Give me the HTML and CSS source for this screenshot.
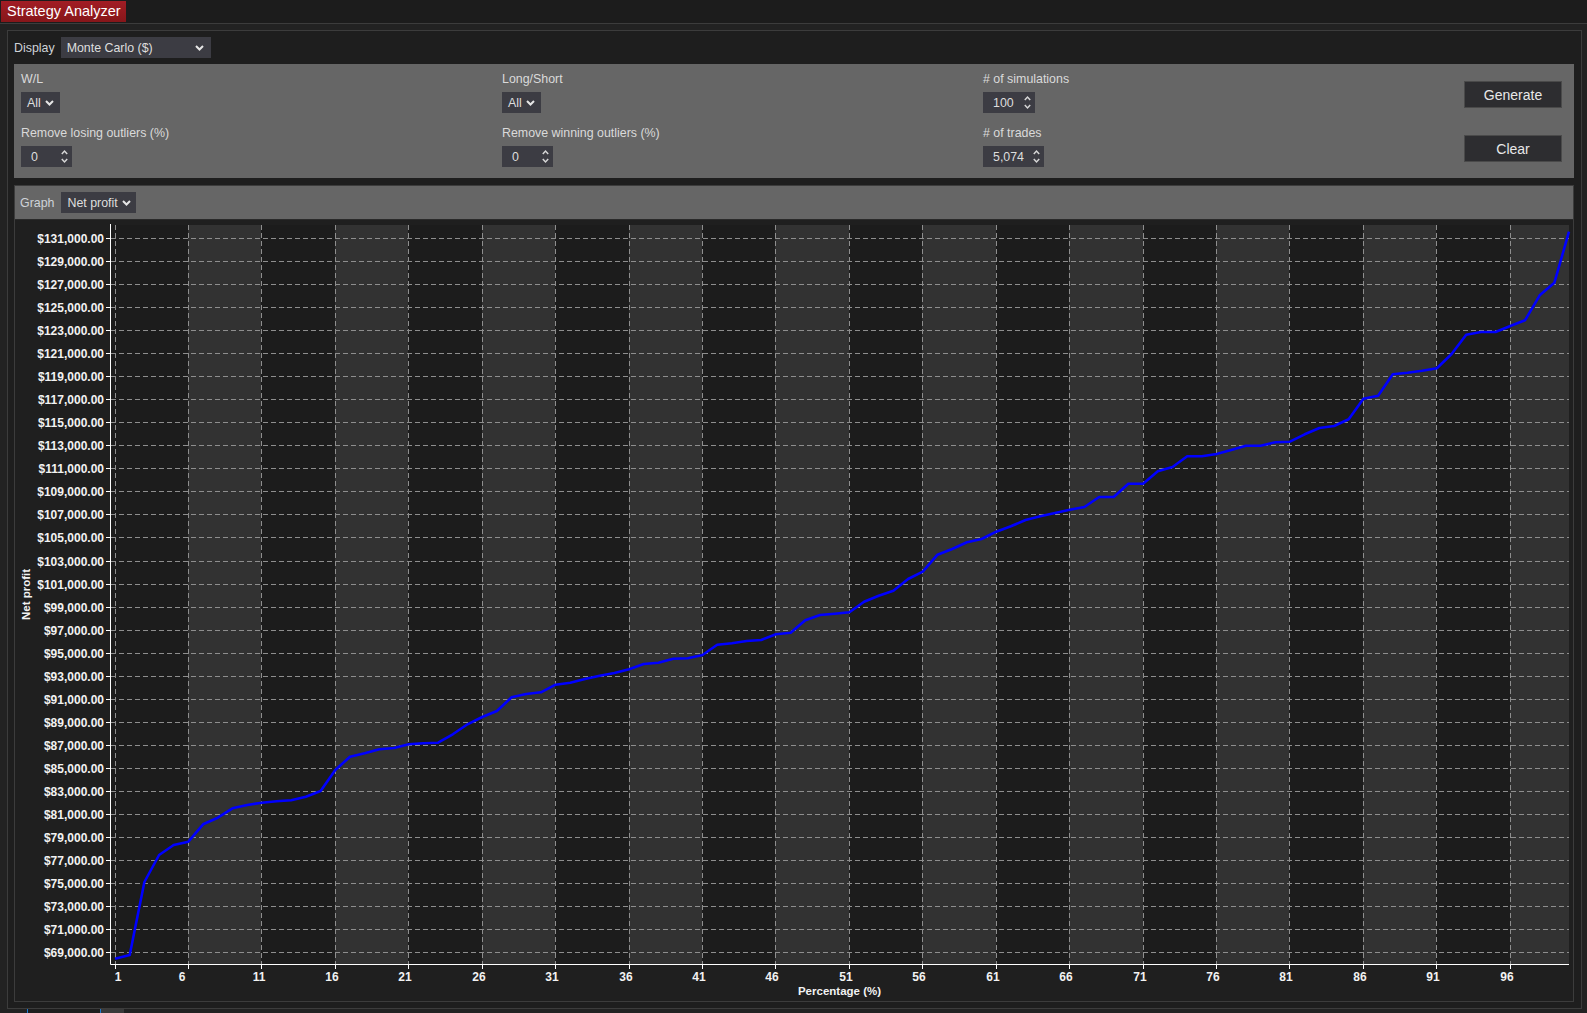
FILE: index.html
```html
<!DOCTYPE html>
<html>
<head>
<meta charset="utf-8">
<title>Strategy Analyzer</title>
<link rel="stylesheet" href="styles.css">
</head>
<body>
<div class="topbar"><div class="tab">Strategy Analyzer</div></div>
<div class="frame">
  <div class="display-row">
    <span class="lbl-inline">Display</span>
    <div class="dd dd-display"><span>Monte Carlo ($)</span><svg class="chev" width="9" height="6" viewBox="0 0 9 6"><polyline points="1,1 4.5,4.5 8,1"/></svg></div>
  </div>
  <div class="gray">
    <div class="col">
      <div class="field"><div class="lbl">W/L</div><div class="dd dd-all"><span>All</span><svg class="chev" width="9" height="6" viewBox="0 0 9 6"><polyline points="1,1 4.5,4.5 8,1"/></svg></div></div>
      <div class="field"><div class="lbl">Remove losing outliers (%)</div><div class="spin spin-a"><span class="val">0</span><svg class="arrows" width="7" height="21" viewBox="0 0 7 21"><polyline points="0.8,8 3.5,5 6.2,8"/><polyline points="0.8,13 3.5,16 6.2,13"/></svg></div></div>
    </div>
    <div class="col">
      <div class="field"><div class="lbl">Long/Short</div><div class="dd dd-all"><span>All</span><svg class="chev" width="9" height="6" viewBox="0 0 9 6"><polyline points="1,1 4.5,4.5 8,1"/></svg></div></div>
      <div class="field"><div class="lbl">Remove winning outliers (%)</div><div class="spin spin-a"><span class="val">0</span><svg class="arrows" width="7" height="21" viewBox="0 0 7 21"><polyline points="0.8,8 3.5,5 6.2,8"/><polyline points="0.8,13 3.5,16 6.2,13"/></svg></div></div>
    </div>
    <div class="col">
      <div class="field"><div class="lbl"># of simulations</div><div class="spin spin-b"><span class="val">100</span><svg class="arrows" width="7" height="21" viewBox="0 0 7 21"><polyline points="0.8,8 3.5,5 6.2,8"/><polyline points="0.8,13 3.5,16 6.2,13"/></svg></div></div>
      <div class="field"><div class="lbl"># of trades</div><div class="spin spin-c"><span class="val">5,074</span><svg class="arrows" width="7" height="21" viewBox="0 0 7 21"><polyline points="0.8,8 3.5,5 6.2,8"/><polyline points="0.8,13 3.5,16 6.2,13"/></svg></div></div>
    </div>
    <div class="btns">
      <div class="btn">Generate</div>
      <div class="btn">Clear</div>
    </div>
  </div>
  <div class="chart-panel">
    <div class="graph-head">
      <span class="lbl-inline">Graph</span>
      <div class="dd dd-graph"><span>Net profit</span><svg class="chev" width="9" height="6" viewBox="0 0 9 6"><polyline points="1,1 4.5,4.5 8,1"/></svg></div>
    </div>
    <div class="chart">
      <svg class="plot" width="1558" height="781" viewBox="15 220 1558 781">
        <rect class="plot-bg" x="110" y="225" width="1459" height="739"/>
        <g class="bands">
          <rect x="188" y="225" width="73" height="739"/>
          <rect x="335" y="225" width="73" height="739"/>
          <rect x="482" y="225" width="73" height="739"/>
          <rect x="629" y="225" width="73" height="739"/>
          <rect x="775" y="225" width="74" height="739"/>
          <rect x="922" y="225" width="74" height="739"/>
          <rect x="1069" y="225" width="74" height="739"/>
          <rect x="1216" y="225" width="73" height="739"/>
          <rect x="1363" y="225" width="73" height="739"/>
          <rect x="1510" y="225" width="59" height="739"/>
        </g>
        <path class="grid" d="M111 952.5H1569M111 929.5H1569M111 906.5H1569M111 883.5H1569M111 860.5H1569M111 837.5H1569M111 814.5H1569M111 791.5H1569M111 768.5H1569M111 745.5H1569M111 722.5H1569M111 699.5H1569M111 676.5H1569M111 653.5H1569M111 630.5H1569M111 607.5H1569M111 584.5H1569M111 561.5H1569M111 537.5H1569M111 514.5H1569M111 491.5H1569M111 468.5H1569M111 445.5H1569M111 422.5H1569M111 399.5H1569M111 376.5H1569M111 353.5H1569M111 330.5H1569M111 307.5H1569M111 284.5H1569M111 261.5H1569M111 238.5H1569"/>
        <path class="grid" d="M115.5 225V964M188.5 225V964M261.5 225V964M335.5 225V964M408.5 225V964M482.5 225V964M555.5 225V964M629.5 225V964M702.5 225V964M775.5 225V964M849.5 225V964M922.5 225V964M996.5 225V964M1069.5 225V964M1143.5 225V964M1216.5 225V964M1289.5 225V964M1363.5 225V964M1436.5 225V964M1510.5 225V964"/>
        <path class="ticks" d="M106 952.5H110M106 929.5H110M106 906.5H110M106 883.5H110M106 860.5H110M106 837.5H110M106 814.5H110M106 791.5H110M106 768.5H110M106 745.5H110M106 722.5H110M106 699.5H110M106 676.5H110M106 653.5H110M106 630.5H110M106 607.5H110M106 584.5H110M106 561.5H110M106 537.5H110M106 514.5H110M106 491.5H110M106 468.5H110M106 445.5H110M106 422.5H110M106 399.5H110M106 376.5H110M106 353.5H110M106 330.5H110M106 307.5H110M106 284.5H110M106 261.5H110M106 238.5H110M115.5 964V969M188.5 964V969M261.5 964V969M335.5 964V969M408.5 964V969M482.5 964V969M555.5 964V969M629.5 964V969M702.5 964V969M775.5 964V969M849.5 964V969M922.5 964V969M996.5 964V969M1069.5 964V969M1143.5 964V969M1216.5 964V969M1289.5 964V969M1363.5 964V969M1436.5 964V969M1510.5 964V969"/>
        <path class="axis" d="M110.5 224V964.5H1569"/>
        <polyline class="curve" points="115,958.7 129.7,955 144.4,882 159.1,855 173.7,845 188.4,841.7 203.1,824.3 217.8,817.7 232.5,808.3 247.2,805 261.9,802.7 276.6,801.3 291.2,800.3 305.9,796.7 320.6,791 335.3,770 350,756.7 364.7,753.3 379.4,749.3 394.1,748 408.7,744.3 423.4,743.3 438.1,742.7 452.8,734.3 467.5,724.3 482.2,717 496.9,711 511.6,697.3 526.2,694 540.9,692.3 555.6,684.7 570.3,682.7 585,679 599.7,675.7 614.4,673 629.1,669.3 643.7,664 658.4,662.7 673.1,658.7 687.8,658.3 702.5,655 717.2,644.7 731.9,643.3 746.6,641 761.2,640 775.9,634.3 790.6,632.7 805.3,620.3 820,615 834.7,613.7 849.4,612.3 864.1,601.7 878.7,595.7 893.4,590.7 908.1,579 922.8,571.7 937.5,554.7 952.2,549 966.9,542.3 981.6,539 996.2,531.7 1010.9,526.3 1025.6,520 1040.3,516.3 1055,513 1069.7,509.7 1084.4,507 1099.1,497 1113.7,497 1128.4,483.7 1143.1,483.7 1157.8,471.3 1172.5,467 1187.2,456.3 1201.9,456.3 1216.6,454 1231.2,450 1245.9,445.7 1260.6,445.7 1275.3,442.3 1290,441.7 1304.7,434.3 1319.4,428 1334.1,426 1348.7,419.3 1363.4,398.7 1378.1,395.7 1392.8,374.3 1407.5,372.7 1422.2,370.7 1436.9,368.3 1451.6,354 1466.2,334.7 1480.9,332 1495.6,332 1510.3,326 1525,320.3 1539.7,295.3 1554.4,282.7 1569,231.7"/>
        <g class="ylabels">
          <text x="104" y="957">$69,000.00</text>
          <text x="104" y="934">$71,000.00</text>
          <text x="104" y="911">$73,000.00</text>
          <text x="104" y="888">$75,000.00</text>
          <text x="104" y="865">$77,000.00</text>
          <text x="104" y="842">$79,000.00</text>
          <text x="104" y="819">$81,000.00</text>
          <text x="104" y="796">$83,000.00</text>
          <text x="104" y="773">$85,000.00</text>
          <text x="104" y="750">$87,000.00</text>
          <text x="104" y="727">$89,000.00</text>
          <text x="104" y="704">$91,000.00</text>
          <text x="104" y="681">$93,000.00</text>
          <text x="104" y="658">$95,000.00</text>
          <text x="104" y="635">$97,000.00</text>
          <text x="104" y="612">$99,000.00</text>
          <text x="104" y="589">$101,000.00</text>
          <text x="104" y="566">$103,000.00</text>
          <text x="104" y="542">$105,000.00</text>
          <text x="104" y="519">$107,000.00</text>
          <text x="104" y="496">$109,000.00</text>
          <text x="104" y="473">$111,000.00</text>
          <text x="104" y="450">$113,000.00</text>
          <text x="104" y="427">$115,000.00</text>
          <text x="104" y="404">$117,000.00</text>
          <text x="104" y="381">$119,000.00</text>
          <text x="104" y="358">$121,000.00</text>
          <text x="104" y="335">$123,000.00</text>
          <text x="104" y="312">$125,000.00</text>
          <text x="104" y="289">$127,000.00</text>
          <text x="104" y="266">$129,000.00</text>
          <text x="104" y="243">$131,000.00</text>
        </g>
        <g class="xlabels">
          <text x="118" y="981">1</text>
          <text x="182" y="981">6</text>
          <text x="259" y="981">11</text>
          <text x="332" y="981">16</text>
          <text x="405" y="981">21</text>
          <text x="479" y="981">26</text>
          <text x="552" y="981">31</text>
          <text x="626" y="981">36</text>
          <text x="699" y="981">41</text>
          <text x="772" y="981">46</text>
          <text x="846" y="981">51</text>
          <text x="919" y="981">56</text>
          <text x="993" y="981">61</text>
          <text x="1066" y="981">66</text>
          <text x="1140" y="981">71</text>
          <text x="1213" y="981">76</text>
          <text x="1286" y="981">81</text>
          <text x="1360" y="981">86</text>
          <text x="1433" y="981">91</text>
          <text x="1507" y="981">96</text>
        </g>
        <text class="axis-title" x="839.5" y="995">Percentage (%)</text>
        <text class="axis-title" x="29.5" y="594.5" transform="rotate(-90 29.5 594.5)">Net profit</text>
      </svg>
    </div>
  </div>
</div>
<div class="bottom-tabs"><div class="btab"></div><div class="btab2"></div></div>
</body>
</html>
```
FILE: styles.css
```css
* { box-sizing: border-box; }
html, body { margin: 0; padding: 0; }
body {
  width: 1587px;
  height: 1013px;
  overflow: hidden;
  background: #222222;
  font-family: "Liberation Sans", Arial, sans-serif;
  font-size: 12.4px;
  color: #d4d4d4;
  display: flex;
  flex-direction: column;
}
.topbar {
  height: 24px;
  flex: none;
  background: #1c1c1c;
  border-bottom: 1px solid #3c3c3c;
  padding: 1px 0 0 1px;
}
.tab {
  width: 125px;
  height: 21px;
  background: linear-gradient(#a21d24, #86161a);
  color: #ffffff;
  font-size: 14.5px;
  line-height: 21px;
  padding-left: 6px;
  white-space: nowrap;
}
.frame {
  flex: none;
  margin: 6px 5px 0 7px;
  height: 979px;
  border: 1px solid #3c3c3c;
  background: #1e1e1e;
  padding: 6px 7px 6px 6px;
  display: flex;
  flex-direction: column;
}
.display-row {
  height: 21px;
  display: flex;
  align-items: center;
  gap: 6px;
}
.lbl-inline { color: #cfd3d8; white-space: nowrap; }
.dd {
  height: 21px;
  display: flex;
  align-items: center;
  justify-content: space-between;
  background: #3c3c43;
  color: #dedede;
  padding: 0 6px;
  white-space: nowrap;
}
.dd-all { width: 39px; }
.dd-display { width: 150px; padding: 0 7px 0 6px; }
.dd-graph { width: 75px; padding: 0 5px 0 6px; }
.chev polyline { fill: none; stroke: #e6e6e6; stroke-width: 2; }
.gray {
  margin-top: 6px;
  height: 114px;
  flex: none;
  background: #666666;
  display: flex;
  padding: 8px 12px 11px 7px;
}
.col {
  width: 481px;
  display: flex;
  flex-direction: column;
  gap: 13px;
}
.field { display: flex; flex-direction: column; align-items: flex-start; }
.lbl {
  height: 14px;
  line-height: 14px;
  margin-bottom: 6px;
  color: #dadada;
  white-space: nowrap;
}
.spin {
  height: 21px;
  display: flex;
  align-items: center;
  background: #3c3c43;
  color: #dedede;
  padding: 0 4px 0 10px;
}
.spin .val { flex: 1; }
.spin-a { width: 51px; }
.spin-b { width: 52px; }
.spin-c { width: 61px; }
.arrows polyline { fill: none; stroke: #d6d6d6; stroke-width: 1.5; }
.btns {
  width: 98px;
  display: flex;
  flex-direction: column;
  gap: 27px;
  padding-top: 9px;
}
.btn {
  height: 27px;
  background: #2d2d30;
  border: 1px solid #4a4a4a;
  color: #e8e8e8;
  font-size: 14px;
  display: flex;
  align-items: center;
  justify-content: center;
}
.chart-panel {
  margin-top: 7px;
  height: 817px;
  flex: none;
  border: 1px solid #3c3c3c;
  display: flex;
  flex-direction: column;
}
.graph-head {
  height: 34px;
  flex: none;
  background: #666666;
  border-bottom: 1px solid #2a2a2a;
  display: flex;
  align-items: center;
  gap: 7px;
  padding-left: 5px;
}
.chart { flex: 1; background: #1f1f1f; }
.plot { display: block; }
.plot-bg { fill: #1c1c1c; }
.bands rect { fill: #323232; }
.grid { fill: none; stroke: #8e8e8e; stroke-width: 1; stroke-dasharray: 5 3; }
.ticks { fill: none; stroke: #ffffff; stroke-width: 1; }
.axis { fill: none; stroke: #ffffff; stroke-width: 1; }
.curve { fill: none; stroke: #0000ff; stroke-width: 2.6; stroke-linejoin: round; }
.ylabels text {
  font-family: "Liberation Sans", Arial, sans-serif;
  font-weight: bold;
  font-size: 12px;
  fill: #f2f2f2;
  text-anchor: end;
}
.xlabels text {
  font-family: "Liberation Sans", Arial, sans-serif;
  font-weight: bold;
  font-size: 12px;
  fill: #f2f2f2;
  text-anchor: middle;
}
.axis-title {
  font-family: "Liberation Sans", Arial, sans-serif;
  font-weight: bold;
  font-size: 11.5px;
  fill: #f2f2f2;
  text-anchor: middle;
}
.bottom-tabs {
  flex: 1;
  display: flex;
  padding-left: 27px;
}
.btab {
  width: 74px;
  border-left: 1px solid #1e7ad2;
  border-right: 1px solid #1e7ad2;
  background: #1e1e1e;
}
.btab2 { width: 23px; background: #3a3a3a; }
```
